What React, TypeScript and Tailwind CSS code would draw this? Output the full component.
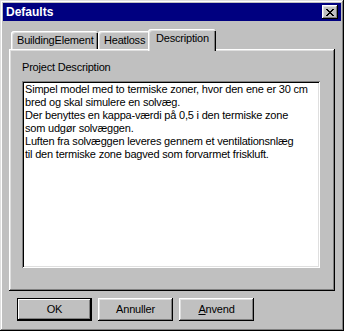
import React from 'react'

const raised =
  'shadow-[inset_-1px_-1px_0_#000,inset_1px_1px_0_#fff,inset_-2px_-2px_0_#808080,inset_2px_2px_0_#dfdfdf]'

const lines = [
  'Simpel model med to termiske zoner, hvor den ene er 30 cm',
  'bred og skal simulere en solvæg.',
  'Der benyttes en kappa-værdi på 0,5 i den termiske zone',
  'som udgør solvæggen.',
  'Luften fra solvæggen leveres gennem et ventilationsnlæg',
  'til den termiske zone bagved som forvarmet friskluft.',
]

function Tab({ label, width, active }: { label: string; width: string; active?: boolean }) {
  if (active) {
    return (
      <div
        className={`${width} relative z-10 -mx-[2px] -mb-[2px] h-[22px] rounded-t-[3px] bg-[#c0c0c0] pl-[8px] pt-[3px] shadow-[inset_1px_1px_0_#fff,inset_2px_2px_0_#dfdfdf,inset_-1px_0_0_#000,inset_-2px_0_0_#808080]`}
      >
        {label}
      </div>
    )
  }
  return (
    <div
      className={`${width} h-[18px] rounded-t-[3px] bg-[#c0c0c0] pl-[6px] pt-[3px] shadow-[inset_1px_1px_0_#fff,inset_2px_2px_0_#dfdfdf,inset_-1px_0_0_#000,inset_-2px_0_0_#808080]`}
    >
      {label}
    </div>
  )
}

function Button({ children, primary }: { children: React.ReactNode; primary?: boolean }) {
  return (
    <button
      className={`flex h-[23px] w-[75px] items-center justify-center bg-[#c0c0c0] text-[11px] text-black ${
        primary
          ? 'border border-black shadow-[inset_-1px_-1px_0_#000,inset_1px_1px_0_#fff,inset_-2px_-2px_0_#808080]'
          : raised
      }`}
    >
      {children}
    </button>
  )
}

export default function App() {
  return (
    <div className="h-[331px] w-[344px] bg-[#c0c0c0] p-[3px] font-['Liberation_Sans',Arial,sans-serif] text-[11px] leading-[13px] tracking-[-0.2px] text-black shadow-[inset_-1px_-1px_0_#000,inset_1px_1px_0_#dfdfdf,inset_-2px_-2px_0_#808080,inset_2px_2px_0_#fff]">
      {/* title bar */}
      <div className="flex h-[18px] items-center justify-between bg-[#000080] pl-[3px] pr-[3px]">
        <span className="text-[12px] font-bold tracking-normal text-white">Defaults</span>
        <button
          className={`flex h-[14px] w-[16px] items-center justify-center bg-[#c0c0c0] ${raised}`}
        >
          <svg width="8" height="7" viewBox="0 0 8 7" shapeRendering="crispEdges">
            <path
              d="M0 0h2v1h-2zM6 0h2v1h-2zM1 1h2v1h-2zM5 1h2v1h-2zM2 2h4v1h-4zM3 3h2v1h-2zM2 4h4v1h-4zM1 5h2v1h-2zM5 5h2v1h-2zM0 6h2v1h-2zM6 6h2v1h-2z"
              fill="#000"
            />
          </svg>
        </button>
      </div>

      {/* tabs */}
      <div className="mx-[6px] mt-[8px]">
        <div className="flex h-[20px] items-end pl-[2px]">
          <Tab label="BuildingElement" width="w-[87px]" />
          <Tab label="Heatloss" width="w-[52px]" />
          <Tab label="Description" width="w-[68px]" active />
        </div>
        <div className={`h-[242px] px-[13px] pt-[12px] ${raised}`}>
          <div>Project Description</div>
          <div className="mt-[7px] h-[187px] w-[298px] bg-white pl-[3px] pt-[2px] shadow-[inset_1px_1px_0_#808080,inset_-1px_-1px_0_#fff,inset_2px_2px_0_#000,inset_-2px_-2px_0_#dfdfdf]">
            {lines.map((l) => (
              <div key={l} className="whitespace-nowrap">
                {l}
              </div>
            ))}
          </div>
        </div>
      </div>

      {/* buttons */}
      <div className="ml-[14px] mt-[7px] flex gap-[6px]">
        <Button primary>OK</Button>
        <Button>Annuller</Button>
        <Button>
          <span>
            <span className="underline">A</span>nvend
          </span>
        </Button>
      </div>
    </div>
  )
}
